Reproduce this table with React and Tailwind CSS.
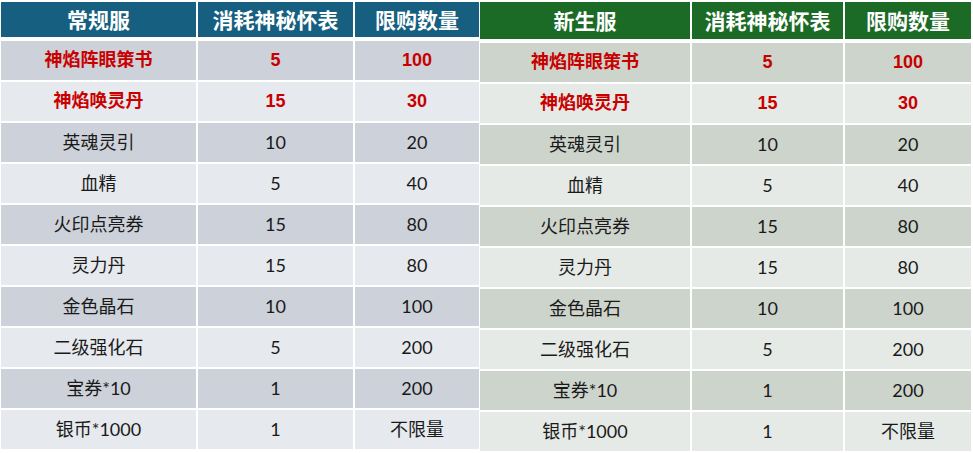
import React from 'react';

const rows = [
  { name: '神焰阵眼策书', cost: '5', limit: '100', hot: true },
  { name: '神焰唤灵丹', cost: '15', limit: '30', hot: true },
  { name: '英魂灵引', cost: '10', limit: '20' },
  { name: '血精', cost: '5', limit: '40' },
  { name: '火印点亮券', cost: '15', limit: '80' },
  { name: '灵力丹', cost: '15', limit: '80' },
  { name: '金色晶石', cost: '10', limit: '100' },
  { name: '二级强化石', cost: '5', limit: '200' },
  { name: '宝券*10', cost: '1', limit: '200' },
  { name: '银币*1000', cost: '1', limit: '不限量' },
];

const themes = {
  blue: {
    head: 'bg-[#175f80] h-[35px]',
    dark: 'bg-[#cdd1d9]',
    light: 'bg-[#e6e9ed]',
    cols: 'grid-cols-[195px_155px_124px]',
    width: 'w-[478px]',
  },
  green: {
    head: 'bg-[#1b6a25] h-[37px]',
    dark: 'bg-[#cdd4cc]',
    light: 'bg-[#e6eae6]',
    cols: 'grid-cols-[210px_151px_126px]',
    width: 'w-[491px]',
  },
};

const PriceTable = ({ title, theme }) => {
  const t = themes[theme];
  return (
    <div className={`${t.width} flex flex-col`}>
      <div className={`grid ${t.cols} gap-x-[2px]`}>
        {[title, '消耗神秘怀表', '限购数量'].map((h, i) => (
          <div
            key={i}
            className={`${t.head} flex items-center justify-center text-white font-bold text-[21px]`}
          >
            {h}
          </div>
        ))}
      </div>

      <div className={`grid ${t.cols} gap-x-[2px] gap-y-[2px] mt-[4px]`}>
        {rows.map((row, r) => {
          const bg = r % 2 === 0 ? t.dark : t.light;
          const text = row.hot
            ? 'text-[#c80000] font-bold text-[18px] font-["Liberation_Sans","Noto_Sans_CJK_SC",sans-serif]'
            : 'text-[#1a1a1a] text-[18px]';
          return [row.name, row.cost, row.limit].map((cell, c) => (
            <div key={`${r}-${c}`} className={`${bg} ${text} h-[39px] flex items-center justify-center`}>
              {cell}
            </div>
          ));
        })}
      </div>
    </div>
  );
};

export default function App() {
  return (
    <div className='w-[973px] h-[453px] bg-white flex gap-x-[1px] pt-[2px] pl-[1px] font-["Lato","Noto_Sans_CJK_SC",sans-serif]'>
      <PriceTable title="常规服" theme="blue" />
      <PriceTable title="新生服" theme="green" />
    </div>
  );
}
